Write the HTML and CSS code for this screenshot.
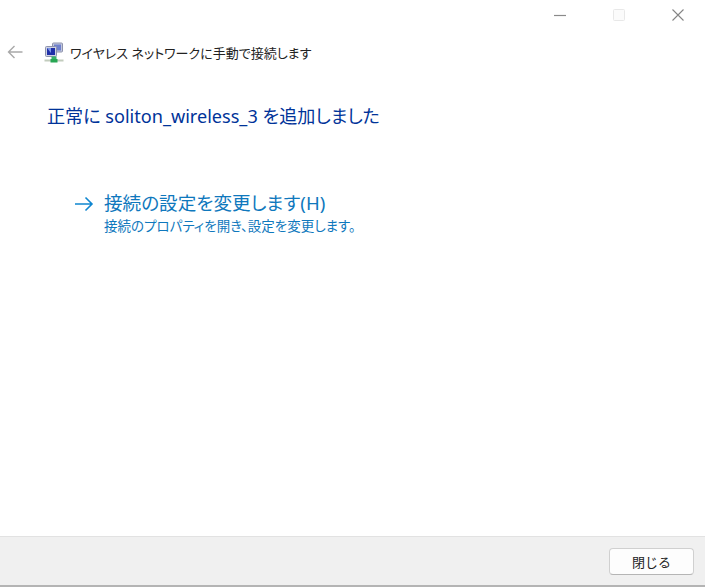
FILE: index.html
```html
<!DOCTYPE html>
<html lang="ja">
<head>
  <meta charset="UTF-8">
  <title>ワイヤレス ネットワークに手動で接続します</title>
  <link rel="stylesheet" href="styles.css">
</head>
<body>
  <div class="window">
    <div class="caption">
      <svg class="cap-icon" width="14" height="14" viewBox="0 0 14 14"><path d="M1 7.500h12" stroke="#8a8a8a" stroke-width="1.200" fill="none"/></svg>
      <svg class="cap-icon" width="14" height="14" viewBox="0 0 14 14"><rect x="1.500" y="1.500" width="11" height="11" rx="1" stroke="#e8e8e8" fill="#fbfbfb"/></svg>
      <svg class="cap-icon" width="14" height="14" viewBox="0 0 14 14"><path d="M1.500 1.500l11 11M12.500 1.500l-11 11" stroke="#858585" stroke-width="1.100" fill="none"/></svg>
    </div>
    <div class="nav">
      <svg class="back" width="16" height="14" viewBox="0 0 16 14"><path d="M1.500 7h14M7.500 1L1.500 7l6 6" stroke="#a9a9a9" stroke-width="1.400" fill="none"/></svg>
      <svg class="net-icon" width="20" height="21" viewBox="0 0 20 21">
        <rect x="8.500" y="1" width="10" height="9" rx="1" fill="#c3c8de" stroke="#8d92ac"/>
        <rect x="10" y="2.500" width="7" height="6" fill="#6f80cc"/>
        <rect x="1.500" y="4.500" width="11" height="10" rx="1" fill="#cdd1e2" stroke="#8d92ac"/>
        <rect x="3" y="6" width="8" height="7" fill="#1f2fa8"/>
        <path d="M3 6h4v5z" fill="#7d95e6"/>
        <rect x="7.500" y="14.500" width="5" height="3" fill="#36b568"/>
        <rect x="0.500" y="17.500" width="19" height="2" fill="#c2ccbd"/>
        <rect x="6.500" y="17" width="7" height="3.500" fill="#27a653"/>
      </svg>
      <span class="nav-title">ワイヤレス ネットワークに手動で接続します</span>
    </div>
    <main class="content">
      <h1 class="headline">正常に soliton_wireless_3 を追加しました</h1>
      <div class="task">
        <svg class="task-arrow" width="20" height="16" viewBox="0 0 20 16"><path d="M1 8h17M11.500 1.500L18 8l-6.500 6.500" stroke="#0f86d0" stroke-width="1.600" fill="none"/></svg>
        <div class="task-text">
          <div class="task-name">接続の設定を変更します(H)</div>
          <div class="task-desc">接続のプロパティを開き、設定を変更します。</div>
        </div>
      </div>
    </main>
    <footer class="footer">
      <button class="close-btn">閉じる</button>
    </footer>
  </div>
</body>
</html>
```
FILE: styles.css
```css
* { margin: 0; padding: 0; box-sizing: border-box; }
html, body { height: 100%; }
body {
  background: #fff;
  font-family: "Noto Sans", "Noto Sans CJK JP", sans-serif;
  font-feature-settings: "palt";
  overflow: hidden;
}
.window {
  height: 587px;
  display: flex;
  flex-direction: column;
}
.caption {
  height: 29px;
  display: flex;
  justify-content: flex-end;
  align-items: center;
  gap: 45px;
  padding-right: 20px;
  flex: none;
}
.nav {
  height: 46px;
  display: flex;
  align-items: center;
  padding-left: 7px;
  flex: none;
}
.back { margin-right: 21px; }
.net-icon { margin-right: 6px; }
.nav-title {
  font-size: 13px;
  color: #222;
}
.content {
  flex: 1;
  padding: 28px 0 0 47px;
}
.headline {
  font-size: 18.100px;
  font-weight: normal;
  color: #003399;
  line-height: 26px;
}
.task {
  display: flex;
  margin: 62px 0 0 27px;
}
.task-arrow {
  margin: 5px 10px 0 0;
  flex: none;
}
.task-name {
  font-size: 18.600px;
  line-height: 24px;
  color: #0f78bd;
}
.task-desc {
  font-size: 13.500px;
  line-height: 23px;
  color: #0f78bd;
}
.footer {
  height: 51px;
  flex: none;
  background: #f0f0f0;
  border-top: 1px solid #e2e2e2;
  border-bottom: 2px solid #b4b4b4;
  display: flex;
  justify-content: flex-end;
  align-items: center;
  padding-right: 11px;
}
.close-btn {
  width: 85px;
  height: 27px;
  background: #fdfdfd;
  border: 1px solid #d0d0d0;
  border-bottom-color: #b5b5b5;
  border-radius: 4px;
  font-family: inherit;
  font-size: 13px;
  color: #222;
}
```
